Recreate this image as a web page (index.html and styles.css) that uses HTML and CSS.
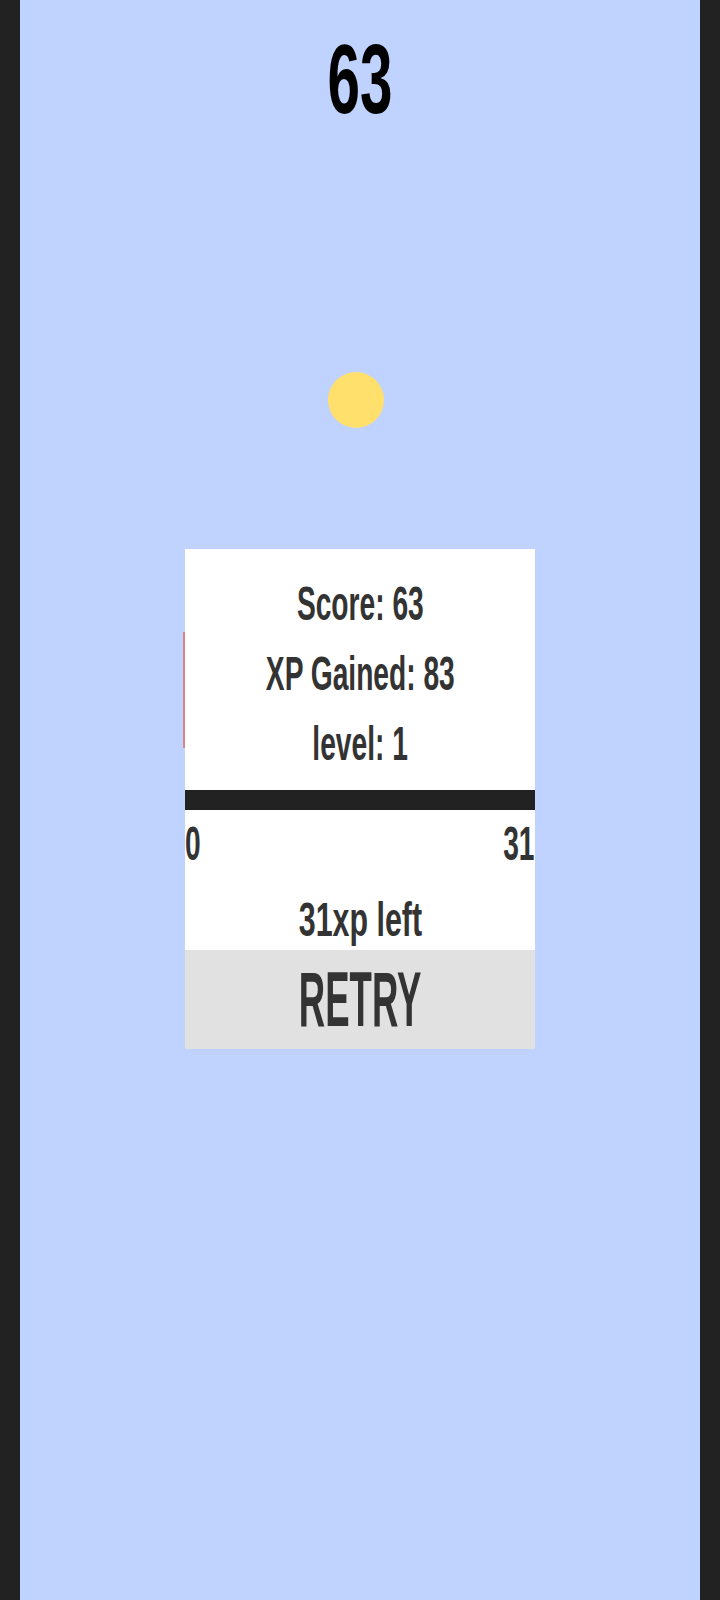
FILE: index.html
```html
<!DOCTYPE html>
<html lang="en">
<head>
  <meta charset="utf-8" />
  <title>Ball game</title>
  <link rel="stylesheet" href="styles.css">
</head>

<body>
  <!-- game area -->
  <main class="game">
    <div class="score"><span class="squeeze">63</span></div>

    <div class="ball"></div>

    <!-- game over panel -->
    <section class="panel">
      <div class="stats">
        <p><span class="squeeze">Score: 63</span></p>
        <p><span class="squeeze">XP Gained: 83</span></p>
        <p><span class="squeeze">level: 1</span></p>
      </div>
      <div class="xp-bar"></div>
      <div class="xp-range">
        <span class="squeeze left">0</span>
        <span class="squeeze right">31</span>
      </div>
      <div class="xp-left"><span class="squeeze">31xp left</span></div>
      <button class="retry"><span class="squeeze">RETRY</span></button>
    </section>
  </main>
</body>
</html>
```

FILE: styles.css
```css
* {
  margin: 0;
  padding: 0;
  box-sizing: border-box;
}

body {
  background-color: #222222;
  font-family: "Liberation Sans Narrow", "Liberation Sans", Arial, sans-serif;
  font-weight: bold;
}

/* 字體壓窄 */
.squeeze {
  display: inline-block;
  transform: scaleX(0.575);
}

/* 遊戲區 */
.game {
  position: relative;
  width: 680px;
  height: 1600px;
  margin: 0 auto;
  background-color: #c0d3fe;
  padding-top: 29px;
}

.score {
  text-align: center;
  font-size: 99px;
  line-height: 1;
  color: #000;
}
.score .squeeze {
  transform: scaleX(0.59);
}

.ball {
  position: absolute;
  left: 308px;
  top: 372px;
  width: 56px;
  height: 56px;
  border-radius: 50%;
  background-color: #ffe06c;
}

/* 結算面板 */
.panel {
  position: relative;
  width: 350px;
  margin: 0 auto;
  margin-top: 421px;
  background-color: #fff;
  color: #333;
}
.panel::before {
  content: "";
  position: absolute;
  left: -2px;
  top: 83px;
  width: 2px;
  height: 116px;
  background-color: #d9848c;
}

.stats {
  padding: 19px 0 12px;
  text-align: center;
  font-size: 49px;
  line-height: 70px;
}

.xp-bar {
  height: 20px;
  background-color: #222222;
}

.xp-range {
  display: flex;
  justify-content: space-between;
  font-size: 49px;
  line-height: 66px;
}
.xp-range .left {
  transform-origin: left center;
}
.xp-range .right {
  transform-origin: right center;
}

.xp-left {
  padding: 22px 0 10px;
  text-align: center;
  font-size: 49px;
  line-height: 42px;
}
.xp-left .squeeze {
  transform: scaleX(0.62);
}

.retry {
  display: block;
  width: 100%;
  height: 99px;
  border: none;
  background-color: #e1e1e1;
  color: #333;
  font-family: inherit;
  font-weight: bold;
  font-size: 77px;
  line-height: 99px;
  text-align: center;
}
.retry .squeeze {
  transform: scaleX(0.475);
}
```
